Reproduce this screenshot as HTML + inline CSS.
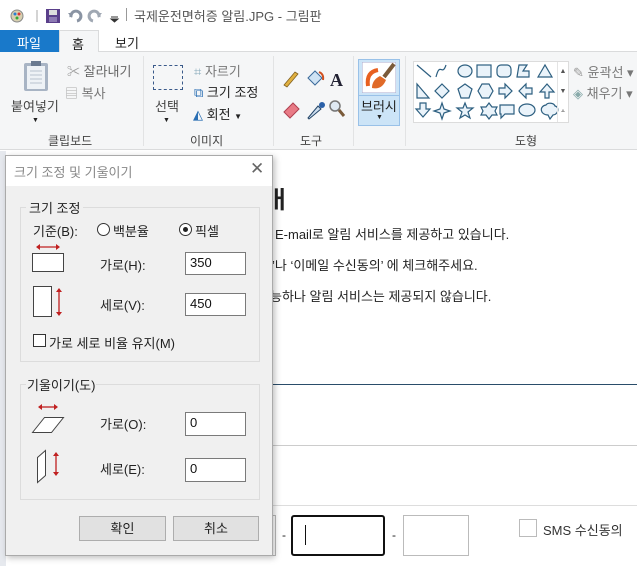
<!DOCTYPE html>
<html><head><meta charset="utf-8"><style>
*{margin:0;padding:0;box-sizing:border-box}
body{width:637px;height:566px;overflow:hidden;background:#fff;font-family:"Liberation Sans","Noto Sans CJK KR",sans-serif;font-size:12px;color:#222;position:relative}
.a{position:absolute;white-space:nowrap}
.g{color:#444}
.inp{position:absolute;background:#fff;border:1px solid #7a7a7a;font-size:13px;padding:2px 0 0 4px;color:#111}
.lbl{position:absolute;font-size:13px;color:#222;white-space:nowrap}
</style></head><body>
<!-- title bar -->
<div class="a" style="left:0;top:0;width:637px;height:30px;background:#fff"></div>
<svg class="a" style="left:9px;top:7px" width="115" height="18">
<circle cx="8" cy="9" r="6" fill="#d8d0b0" stroke="#888"/><circle cx="6" cy="7" r="1.5" fill="#2a7fd4"/><circle cx="10" cy="7" r="1.5" fill="#d33"/><circle cx="8" cy="11" r="1.5" fill="#3a3"/>
<line x1="28" y1="3" x2="28" y2="15" stroke="#aaa"/>
<rect x="37" y="2" width="14" height="14" fill="#5a3f8a"/><rect x="40" y="3" width="8" height="5" fill="#ddd"/><rect x="40" y="10" width="8" height="5" fill="#8d7ab3"/>
<path d="M62 10 a5 5 0 1 1 6 4" stroke="#8a94a3" stroke-width="3" fill="none"/><path d="M59 6 l5 0 l-1 5z" fill="#8a94a3"/>
<path d="M90 10 a5 5 0 1 0 -6 4" stroke="#a0a8b3" stroke-width="3" fill="none"/><path d="M93 6 l-5 0 l1 5z" fill="#a0a8b3"/>
<path d="M102 10h7M102 12l3.5 3 3.5-3z" stroke="#333" fill="#333"/>
</svg>
<div class="a" style="left:126px;top:8px;height:13px;border-left:1px solid #999"></div>
<div class="a" style="left:134px;top:6px;font-size:13px;color:#555">국제운전면허증 알림.JPG - 그림판</div>
<!-- tabs -->
<div class="a" style="left:0;top:30px;width:637px;height:22px;background:#fff;border-bottom:1px solid #dadbdc"></div>
<div class="a" style="left:0;top:30px;width:59px;height:22px;background:#1979ca;color:#fff;font-size:13px;padding:3px 0 0 17px">파일</div>
<div class="a" style="left:59px;top:30px;width:40px;height:23px;background:#f5f6f7;border:1px solid #dadbdc;border-bottom:none;font-size:13px;padding:3px 0 0 12px">홈</div>
<div class="a" style="left:115px;top:33px;font-size:13px">보기</div>
<!-- ribbon -->
<div class="a" style="left:0;top:52px;width:637px;height:98px;background:#f5f6f7;border-bottom:1px solid #dadbdc"></div>
<div class="a" style="left:143px;top:56px;height:90px;border-left:1px solid #e2e3e4"></div>
<div class="a" style="left:273px;top:56px;height:90px;border-left:1px solid #e2e3e4"></div>
<div class="a" style="left:353px;top:56px;height:90px;border-left:1px solid #e2e3e4"></div>
<div class="a" style="left:405px;top:56px;height:90px;border-left:1px solid #e2e3e4"></div>
<svg class="a" style="left:22px;top:60px" width="30" height="32"><rect x="2" y="3" width="24" height="28" rx="2" fill="#a8b4c4"/><rect x="5" y="6" width="18" height="23" fill="#eef2f6"/><rect x="9" y="1" width="10" height="5" fill="#6a7a90"/><path d="M8 11h12M8 15h12M8 19h12M8 23h12" stroke="#b8c2cf"/></svg>
<div class="a g" style="left:11px;top:96px;font-size:13px">붙여넣기</div>
<div class="a" style="left:32px;top:117px;font-size:7px">▼</div>
<div class="a" style="left:67px;top:61px;color:#666;font-size:13px"><span style="color:#999">✂</span> 잘라내기</div>
<div class="a" style="left:65px;top:83px;color:#777;font-size:13px"><span style="color:#aaa">▤</span> 복사</div>
<div class="a g" style="left:48px;top:132px;font-size:12px">클립보드</div>
<div class="a" style="left:153px;top:65px;width:30px;height:25px;border:1px dashed #3a5a8a"></div>
<div class="a g" style="left:155px;top:96px;font-size:13px">선택</div>
<div class="a" style="left:163px;top:117px;font-size:7px">▼</div>
<div class="a" style="left:194px;top:61px;color:#777;font-size:13px"><span style="color:#8ab">⌗</span> 자르기</div>
<div class="a" style="left:194px;top:82px;font-size:13px"><span style="color:#2a6fb4">⧉</span> 크기 조정</div>
<div class="a" style="left:193px;top:104px;font-size:13px"><span style="color:#2a6fb4">◭</span> 회전 <span style="font-size:8px">▼</span></div>
<div class="a g" style="left:190px;top:132px">이미지</div>
<svg class="a" style="left:281px;top:66px" width="70" height="60">
<path d="M3 19 L14 6 L17 8 L6 21z" fill="#e0b040" stroke="#806020" stroke-width=".8"/>
<path d="M27 12 l7-7 7 7 -7 7z" fill="#cfe3f4" stroke="#3a6a9a"/><path d="M38 6 q5 2 4 8" stroke="#d05020" stroke-width="2" fill="none"/>
<text x="49" y="20" font-family="Liberation Serif" font-weight="bold" font-size="18" fill="#223">A</text>
<path d="M3 46 l9-9 6 6 -9 9z" fill="#e87b86" stroke="#b04050"/>
<path d="M27 52 l10-12 3 3 -12 10z" fill="#cde" stroke="#246"/><circle cx="41" cy="39" r="3" fill="#2a60a8"/>
<circle cx="54" cy="40" r="5" fill="#dfe9f3" stroke="#777" stroke-width="1.5"/><path d="M58 44l5 6" stroke="#7a5a3a" stroke-width="3"/>
</svg>
<div class="a g" style="left:300px;top:132px">도구</div>
<div class="a" style="left:358px;top:59px;width:42px;height:67px;background:#cce4f7;border:1px solid #99c1e8"></div>
<div class="a" style="left:358px;top:95px;width:42px;height:1px;background:#99c1e8"></div>
<svg class="a" style="left:362px;top:62px" width="34" height="31"><rect width="34" height="31" fill="#fff" stroke="#aac"/><path d="M6 24 q-2-14 10-16" stroke="#e86020" stroke-width="4" fill="none"/><path d="M10 26 q10 2 14-8 l-6-4 q-8 4-8 12z" fill="#e06a28"/><path d="M22 15 l10-13" stroke="#7a5a3a" stroke-width="4"/></svg>
<div class="a" style="left:361px;top:96px;font-size:13px">브러시</div>
<div class="a" style="left:376px;top:114px;font-size:7px">▼</div>
<div class="a" style="left:413px;top:61px;width:156px;height:62px;background:#fff;border:1px solid #dcdcdc"></div>
<svg class="a" style="left:414px;top:62px" width="155" height="60" fill="#eaf3fa" stroke="#2d5f80" stroke-width="1.2">
<path d="M3 3l14 12" fill="none"/><path d="M22 15c4-16 6 0 10-12" fill="none"/>
<ellipse cx="51" cy="9" rx="7" ry="6"/><rect x="63" y="3" width="14" height="12"/><rect x="83" y="3" width="14" height="12" rx="4"/>
<path d="M103 15l2-12h8l-4 6h6v6z"/><path d="M124 15l7-12 7 12z"/>
<path d="M3 36v-14l12 14z"/><path d="M28 22l7 7-7 7-7-7z"/><path d="M51 22l7 5-3 9h-8l-3-9z"/><path d="M68 22h7l4 7-4 7h-7l-4-7z"/>
<path d="M85 26h6v-4l7 7-7 7v-4h-6z"/><path d="M118 26h-6v-4l-7 7 7 7v-4h6z"/><path d="M131 36v-6h-5l7-8 7 8h-5v6z"/>
<path d="M6 41v6h-4l7 8 7-8h-4v-6z"/><path d="M28 41l2 6 6 2-6 2-2 6-2-6-6-2 6-2z"/><path d="M51 41l2 5h6l-5 4 2 6-5-3-5 3 2-6-5-4h6z"/><path d="M75 41l3 4h5l-2 4 2 4h-5l-3 4-3-4h-5l2-4-2-4h5z"/>
<path d="M86 43h14v9h-9l-4 4v-4h-1z"/><ellipse cx="113" cy="48" rx="8" ry="6"/><path d="M136 57l-2-4c-8 0-9-9-2-10 2-3 8-2 9 1 5 1 3 9-2 9z"/>
</svg>
<div class="a" style="left:557px;top:62px;width:11px;height:60px;border-left:1px solid #e4e4e4;font-size:7px;color:#555;text-align:center;line-height:20px">▲<br>▼<br>⩡</div>
<div class="a" style="left:573px;top:62px;color:#777;font-size:13px"><span style="color:#999">✎</span> 윤곽선 ▾</div>
<div class="a" style="left:573px;top:83px;color:#777;font-size:13px"><span style="color:#8aa">◈</span> 채우기 ▾</div>
<div class="a g" style="left:515px;top:132px">도형</div>
<!-- canvas -->
<div class="a" style="left:0;top:151px;width:6px;height:415px;background:#e6e9ee"></div>
<div class="a" style="left:268px;top:180px;font-size:24px;font-weight:bold;color:#222">ㅐ</div>
<div class="a" style="left:275px;top:224px;font-size:13px;color:#222">E-mail로 알림 서비스를 제공하고 있습니다.</div>
<div class="a" style="left:272px;top:255px;font-size:13px;color:#222">’나 ‘이메일 수신동의’ 에 체크해주세요.</div>
<div class="a" style="left:270px;top:286px;font-size:13px;color:#222">능하나 알림 서비스는 제공되지 않습니다.</div>
<div class="a" style="left:272px;top:384px;width:365px;height:1px;background:#2a4d6a"></div>
<div class="a" style="left:272px;top:445px;width:365px;height:1px;background:#ccc"></div>
<div class="a" style="left:272px;top:505px;width:365px;height:1px;background:#ddd"></div>
<div class="a" style="left:180px;top:515px;width:96px;height:41px;border:1px solid #bbb"></div>
<div class="a" style="left:282px;top:528px;font-size:12px">-</div>
<div class="a" style="left:291px;top:515px;width:94px;height:41px;border:2px solid #111;border-radius:3px"></div>
<div class="a" style="left:305px;top:525px;width:1px;height:20px;background:#111"></div>
<div class="a" style="left:392px;top:528px;font-size:12px">-</div>
<div class="a" style="left:403px;top:515px;width:66px;height:41px;border:1px solid #bbb"></div>
<div class="a" style="left:519px;top:519px;width:18px;height:18px;border:1px solid #bbb"></div>
<div class="a" style="left:543px;top:520px;font-size:13px;color:#333">SMS 수신동의</div>
<!-- dialog -->
<div class="a" style="left:5px;top:155px;width:268px;height:401px;background:#f0f0f0;border:1px solid #aaa;box-shadow:2px 2px 6px rgba(0,0,0,.25)"></div>
<div class="a" style="left:6px;top:156px;width:266px;height:30px;background:#fff"></div>
<div class="a" style="left:14px;top:162px;font-size:13px;color:#888">크기 조정 및 기울이기</div>
<div class="a" style="left:250px;top:159px;font-size:17px;color:#666">✕</div>
<div class="a" style="left:20px;top:207px;width:240px;height:155px;border:1px solid #dcdcdc"></div>
<div class="lbl" style="left:26px;top:198px;background:#f0f0f0;padding:0 3px">크기 조정</div>
<div class="lbl" style="left:33px;top:221px">기준(B):</div>
<div class="a" style="left:97px;top:223px;width:13px;height:13px;border:1px solid #333;border-radius:50%;background:#fff"></div>
<div class="lbl" style="left:113px;top:221px">백분율</div>
<div class="a" style="left:179px;top:223px;width:13px;height:13px;border:1px solid #333;border-radius:50%;background:#fff"></div>
<div class="a" style="left:183px;top:227px;width:5px;height:5px;border-radius:50%;background:#222"></div>
<div class="lbl" style="left:195px;top:221px">픽셀</div>
<svg class="a" style="left:30px;top:242px" width="40" height="80" stroke="#c02020" fill="#c02020">
<path d="M9 5h18" stroke-width="1.3"/><path d="M6 5l4-3v6zM30 5l-4-3v6z" stroke="none"/>
<rect x="2.5" y="11.5" width="31" height="18" fill="#fff" stroke="#444"/>
<rect x="3.5" y="44.5" width="18" height="30" fill="#fff" stroke="#444"/>
<path d="M29 49v22" stroke-width="1.3"/><path d="M29 46l-3 4h6zM29 74l-3-4h6z" stroke="none"/>
</svg>
<div class="lbl" style="left:100px;top:255px">가로(H):</div>
<div class="inp" style="left:185px;top:252px;width:61px;height:23px">350</div>
<div class="lbl" style="left:100px;top:295px">세로(V):</div>
<div class="inp" style="left:185px;top:293px;width:61px;height:23px">450</div>
<div class="a" style="left:33px;top:334px;width:13px;height:13px;border:1px solid #333;background:#fff"></div>
<div class="lbl" style="left:49px;top:333px">가로 세로 비율 유지(M)</div>
<div class="a" style="left:20px;top:384px;width:240px;height:116px;border:1px solid #dcdcdc"></div>
<div class="lbl" style="left:26px;top:375px;background:#f0f0f0;padding:0 1px">기울이기(도)</div>
<svg class="a" style="left:30px;top:402px" width="40" height="84" stroke="#c02020" fill="#c02020">
<path d="M11 5h14" stroke-width="1.3"/><path d="M8 5l4-3v6zM28 5l-4-3v6z" stroke="none"/>
<path d="M2.5 30.5l12-15h19l-12 15z" fill="#fff" stroke="#444"/>
<path d="M7.5 80.5v-25l8-7v25z" fill="#fff" stroke="#444"/>
<path d="M26 53v18" stroke-width="1.3"/><path d="M26 50l-3 4h6zM26 74l-3-4h6z" stroke="none"/>
</svg>
<div class="lbl" style="left:100px;top:414px">가로(O):</div>
<div class="inp" style="left:185px;top:412px;width:61px;height:24px">0</div>
<div class="lbl" style="left:100px;top:459px">세로(E):</div>
<div class="inp" style="left:185px;top:458px;width:61px;height:24px">0</div>
<div class="a" style="left:79px;top:516px;width:87px;height:25px;background:#e1e1e1;border:1px solid #adadad;font-size:13px;text-align:center;line-height:23px">확인</div>
<div class="a" style="left:173px;top:516px;width:86px;height:25px;background:#e1e1e1;border:1px solid #adadad;font-size:13px;text-align:center;line-height:23px">취소</div>
</body></html>
